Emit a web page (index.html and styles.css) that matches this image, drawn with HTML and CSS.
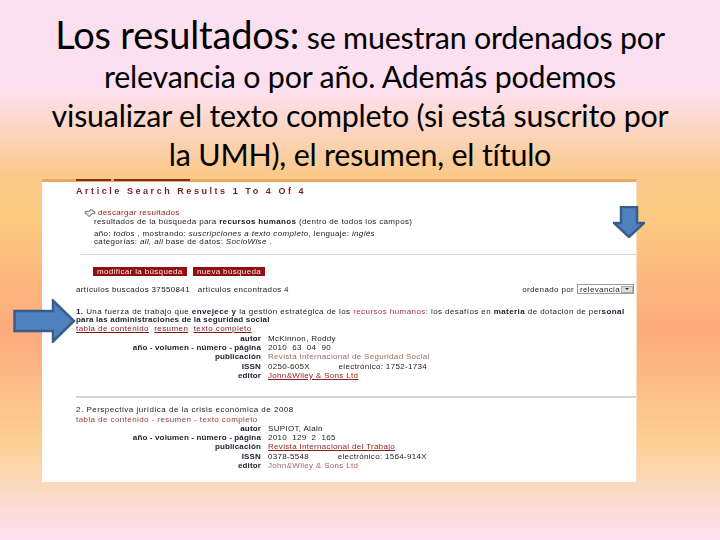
FILE: index.html
```html
<!DOCTYPE html>
<html lang="es">
<head>
<meta charset="utf-8">
<title>Los resultados</title>
<link rel="stylesheet" href="styles.css">
</head>
<body>
<main class="slide">
  <h1 class="title"><span class="lead">Los resultados:</span> se muestran ordenados por<br>relevancia o por año. Además podemos<br>visualizar el texto completo (si está suscrito por<br>la UMH), el resumen, el título</h1>
  <section class="shot">
    <div class="tabs"><i class="tab-a"></i><i class="tab-b"></i></div>
    <div class="inner">
      <h2 class="heading">Article Search Results 1 To 4 Of 4</h2>
      <div class="query">
        <div class="dl"><svg class="dl-icon" viewBox="0 0 14 10" width="14" height="8"><path d="M1 3h5l1-2h3l1 2h2v3H9L7 9H5L3 6H1z" fill="#e8e8e8" stroke="#555" stroke-width="1"/></svg><span class="red">descargar resultados</span></div>
        <p class="q1">resultados de la búsqueda para <b>recursos humanos</b> (dentro de todos los campos)</p>
        <p class="q2">año: <em>todos</em> , mostrando: <em>suscripciones a texto completo</em>, lenguaje: <em>inglés</em></p>
        <p class="q3">categorías: <em>all, all</em>  base de datos: <em>SocioWise</em> .</p>
      </div>
    </div>
    <hr class="rule thin">
    <div class="inner">
      <div class="buttons"><span class="btn">modificar la búsqueda</span><span class="btn">nueva búsqueda</span></div>
      <div class="counts">
        <span>artículos buscados 37550841 &nbsp; artículos encontrados 4</span>
        <span class="sort">ordenado por <span class="select">relevancia<i class="caret"></i></span></span>
      </div>
      <article class="item first">
        <p class="item-title"><b>1.</b> Una fuerza de trabajo que <b>envejece y</b> la gestión estratégica de los <span class="hit">recursos humanos</span>: los desafíos en <b>materia</b> de dotación de per<b>sonal</b><br><b class="sub">para las administraciones de la seguridad social</b></p>
        <p class="links"><u>tabla de contenido</u> &nbsp;<u>resumen</u> &nbsp;<u>texto completo</u></p>
        <dl class="meta">
          <dt>autor</dt><dd>McKinnon, Roddy</dd>
          <dt>año - volumen - número - página</dt><dd>2010 &nbsp;63 &nbsp;04 &nbsp;90</dd>
          <dt>publicación</dt><dd class="faded">Revista Internacional de Seguridad Social</dd>
          <dt>ISSN</dt><dd>0250-605X <span class="gap">electrónico: 1752-1734</span></dd>
          <dt>editor</dt><dd><u class="red">John&amp;Wiley &amp; Sons Ltd</u></dd>
        </dl>
      </article>
    </div>
    <hr class="rule thick">
    <div class="inner">
      <article class="item">
        <p class="item-title">2. Perspectiva jurídica de la crisis económica de 2008</p>
        <p class="links plain">tabla de contenido - resumen - texto completo</p>
        <dl class="meta">
          <dt>autor</dt><dd>SUPIOT, Alain</dd>
          <dt>año - volumen - número - página</dt><dd>2010 &nbsp;129 &nbsp;2 &nbsp;165</dd>
          <dt>publicación</dt><dd><u class="red">Revista Internacional del Trabajo</u></dd>
          <dt>ISSN</dt><dd>0378-5548 <span class="gap">electrónico: 1564-914X</span></dd>
          <dt>editor</dt><dd class="faded">John&amp;Wiley &amp; Sons Ltd</dd>
        </dl>
      </article>
    </div>
  </section>
  <svg class="arrow arrow-right" viewBox="0 0 63 44" width="63" height="44"><path d="M1.500 12H40V1.500L61 22 40 42.500V32H1.500z" fill="#4f81bd" stroke="#385d8a" stroke-width="2.500"/></svg>
  <svg class="arrow arrow-down" viewBox="0 0 32 32" width="32" height="32"><path d="M8 1H24V17H31L16 31 1 17H8z" fill="#4f81bd" stroke="#385d8a" stroke-width="2.500"/></svg>
</main>
</body>
</html>
```
FILE: styles.css
```css
* { box-sizing: border-box; }
html, body { margin: 0; padding: 0; }
.slide {
  position: relative;
  width: 720px;
  height: 540px;
  overflow: hidden;
  background: linear-gradient(180deg, #fde0f0 0, #fde0f0 90px, #fbc98a 175px, #fbca80 215px, #fdaa7c 330px, #fccf92 440px, #fbd9bd 485px, #fde0f0 535px);
  font-family: "Liberation Sans", sans-serif;
}
.title {
  margin: 0;
  padding-top: 15px;
  height: 179px;
  font: 400 30.400px/39px Lato, sans-serif;
  letter-spacing: -0.2px;
  text-align: center;
  color: #000;
}
.lead { font-size: 38px; }
.shot {
  width: 595px;
  height: 303px;
  margin-left: 42px;
  background: #fff;
  border-top: 3px solid #e8a95c;
  border-right: 1px solid #f4dfc8;
  font-size: 8px;
  line-height: 9px;
  letter-spacing: 0.35px;
  color: #222;
  filter: blur(0.35px);
}
.tabs { display: flex; gap: 3px; height: 0; margin-left: 34px; }
.tabs i { display: block; height: 2px; margin-top: -3px; background: #8c2a1a; }
.tab-a { width: 35px; }
.tab-b { width: 76px; }
.inner { padding-left: 34px; padding-right: 4px; }
.heading {
  margin: 0;
  padding-top: 4px;
  font-size: 9px;
  line-height: 10px;
  font-weight: 700;
  letter-spacing: 2.55px;
  color: #7a1f1f;
}
.red { color: #8b1a1a; }
.query { padding-left: 7px; margin-top: 12px; height: 42px; }
.dl { display: flex; align-items: flex-end; height: 9px; }
.dl-icon { margin-right: 1px; }
.query p { margin: 0; white-space: nowrap; }
.q1 { padding-left: 11px; }
.q2 { padding-left: 11px; margin-top: 3px !important; }
.q3 { padding-left: 11px; line-height: 8.500px; }
.rule { margin: 0 0 0 39px; border: 0; background: #d4d4d4; }
.rule.thin { height: 1px; margin-top: 4px; }
.rule.thick { height: 2px; margin-left: 34px; margin-top: 16px; }
.buttons { display: flex; gap: 6px; padding-left: 17px; margin-top: 12px; }
.btn {
  height: 9px;
  padding: 0 4px;
  line-height: 9px;
  background: #8f0f12;
  color: #f6e6e6;
  white-space: nowrap;
}
.btn:first-child { width: 94px; }
.btn:last-child { width: 72px; }
.counts {
  display: flex;
  justify-content: space-between;
  align-items: center;
  height: 12px;
  margin-top: 7px;
}
.sort { display: flex; align-items: center; gap: 3px; margin-right: -2px; }
.select {
  display: flex;
  align-items: center;
  justify-content: space-between;
  width: 57px;
  height: 10px;
  padding-left: 2px;
  border: 1px solid #999;
}
.caret {
  display: block;
  width: 12px;
  height: 7px;
  background: #ddd;
  border: 1px solid #aaa;
  position: relative;
}
.caret::after {
  content: "";
  position: absolute;
  left: 3px;
  top: 1px;
  border: 2px solid transparent;
  border-top: 2px solid #222;
}
.item.first { margin-top: 13px; }
.item p { margin: 0; white-space: nowrap; }
.item-title { font-size: 8px; line-height: 8px; letter-spacing: 0.42px; color: #223; }
.sub { letter-spacing: 0.2px; }
.item:not(.first) { margin-top: 7px; }
.item:not(.first) .item-title { line-height: 9px; letter-spacing: 0.5px; }
.hit { color: #a8324a; }
.links { margin-top: 0 !important; color: #7d1518; line-height: 10px; letter-spacing: 0.42px; }
.links.plain { margin-top: 1px !important; color: #9c3a3a; line-height: 9px; }
.meta {
  display: grid;
  grid-template-columns: 185px 1fr;
  column-gap: 7px;
  margin: 0;
}
.meta dt { text-align: right; font-weight: 700; line-height: 9.200px; color: #223; letter-spacing: 0.15px; }
.meta dd { margin: 0; line-height: 9.200px; white-space: nowrap; letter-spacing: 0.32px; }
.faded { color: #a06a60; }
.gap { margin-left: 26px; }
.arrow { position: absolute; }
.arrow-right { left: 13px; top: 299px; }
.arrow-down { left: 613px; top: 206px; }
```
